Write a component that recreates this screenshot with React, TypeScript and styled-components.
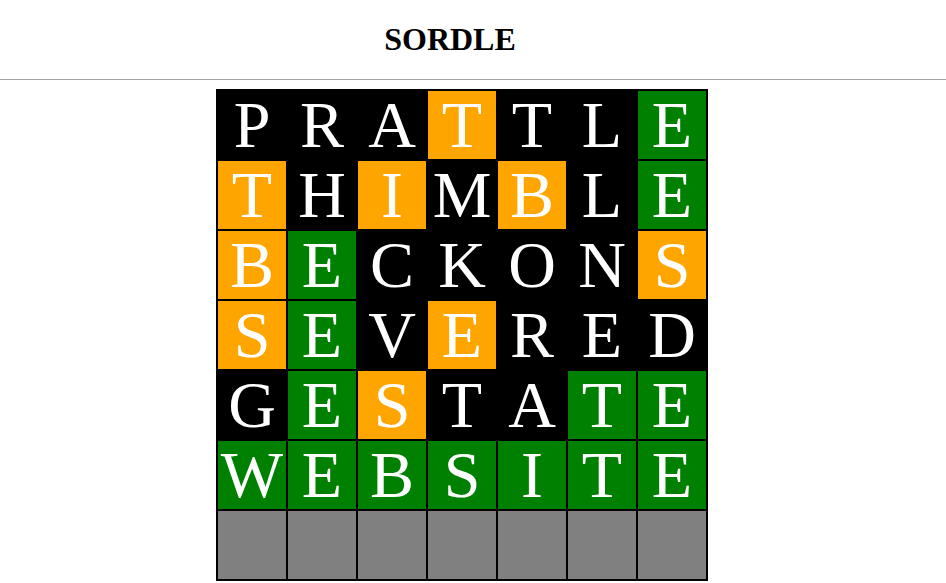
import React from 'react';
import styled, { createGlobalStyle } from 'styled-components';

const GlobalStyle = createGlobalStyle`
  body {
    margin: 0;
    background: #fff;
    font-family: 'Liberation Serif', 'Times New Roman', serif;
  }
`;

const Header = styled.header`
  border-bottom: 1px solid #a6a6a6;
  display: flex;
  justify-content: center;
  padding-right: 46px;
`;

const Title = styled.h1`
  margin: 21px 0;
  font-size: 32px;
  line-height: 37px;
  font-weight: bold;
  color: #000;
`;

const Main = styled.main`
  display: flex;
  justify-content: center;
  padding: 9px 22px 0 0;
`;

const Board = styled.div`
  display: grid;
  grid-template-columns: repeat(7, 70px);
  grid-auto-rows: 70px;
  border: 1px solid #000;
  background: #000;
`;

type Status = 'miss' | 'present' | 'correct' | 'empty';

const colors: Record<Status, string> = {
  miss: '#000000',
  present: '#ffa500',
  correct: '#008000',
  empty: '#808080',
};

const Cell = styled.div<{ $status: Status }>`
  box-sizing: border-box;
  border: 1px solid #000;
  background: ${(p) => colors[p.$status]};
  color: #fff;
  display: flex;
  align-items: center;
  justify-content: center;
  font-size: 66px;
  line-height: 1;
`;

// m = miss, p = present (orange), c = correct (green)
const guesses: [string, string][] = [
  ['PRATTLE', 'mmmpmmc'],
  ['THIMBLE', 'pmpmpmc'],
  ['BECKONS', 'pcmmmmp'],
  ['SEVERED', 'pcmpmmm'],
  ['GESTATE', 'mcpmmcc'],
  ['WEBSITE', 'ccccccc'],
];

const codeMap: Record<string, Status> = { m: 'miss', p: 'present', c: 'correct' };

const App: React.FC = () => {
  return (
    <>
      <GlobalStyle />
      <Header>
        <Title>SORDLE</Title>
      </Header>
      <Main>
        <Board>
          {guesses.map(([word, codes], r) =>
            word.split('').map((ch, i) => (
              <Cell key={`${r}-${i}`} $status={codeMap[codes[i]]}>
                {ch}
              </Cell>
            ))
          )}
          {Array.from({ length: 7 }).map((_, i) => (
            <Cell key={`e-${i}`} $status="empty" />
          ))}
        </Board>
      </Main>
    </>
  );
};

export default App;
